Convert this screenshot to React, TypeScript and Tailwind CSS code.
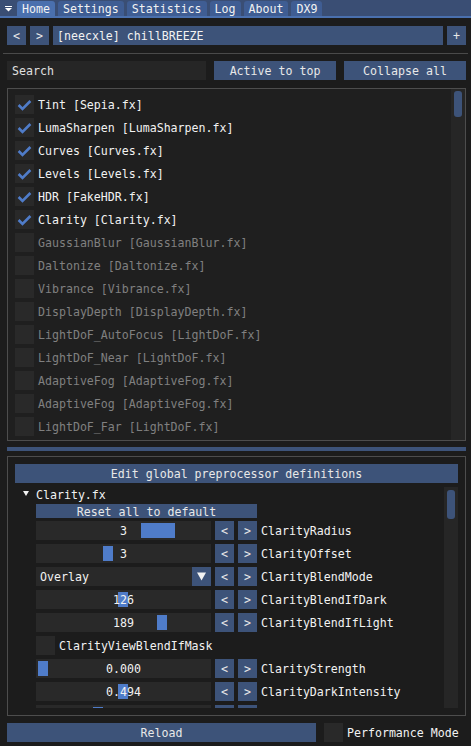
import React from "react";

const effects: [string, boolean][] = [
  ["Tint [Sepia.fx]", true],
  ["LumaSharpen [LumaSharpen.fx]", true],
  ["Curves [Curves.fx]", true],
  ["Levels [Levels.fx]", true],
  ["HDR [FakeHDR.fx]", true],
  ["Clarity [Clarity.fx]", true],
  ["GaussianBlur [GaussianBlur.fx]", false],
  ["Daltonize [Daltonize.fx]", false],
  ["Vibrance [Vibrance.fx]", false],
  ["DisplayDepth [DisplayDepth.fx]", false],
  ["LightDoF_AutoFocus [LightDoF.fx]", false],
  ["LightDoF_Near [LightDoF.fx]", false],
  ["AdaptiveFog [AdaptiveFog.fx]", false],
  ["AdaptiveFog [AdaptiveFog.fx]", false],
  ["LightDoF_Far [LightDoF.fx]", false],
];

const tabs = ["Home", "Settings", "Statistics", "Log", "About", "DX9"];

function Check({ on }: { on?: boolean }) {
  return (
    <div className="h-[19px] w-[19px] shrink-0 bg-[#292929]">
      {on && (
        <svg width="19" height="19" viewBox="0 0 19 19">
          <polyline
            points="3.6,10 7.5,14 15.4,6"
            fill="none"
            stroke="#4f7cc9"
            strokeWidth="2.6"
          />
        </svg>
      )}
    </div>
  );
}

function Btn({ children, className = "" }: { children?: React.ReactNode; className?: string }) {
  return (
    <div className={`flex h-[19px] shrink-0 items-center justify-center bg-[#3d5379] text-[#e8e8e8] ${className}`}>
      <span className="pt-[2px]">{children}</span>
    </div>
  );
}

function Slider({ value, grab, grabW = 10 }: { value: string; grab: number; grabW?: number }) {
  return (
    <div className="relative flex h-[19px] w-[175px] shrink-0 items-center justify-center bg-[#292929]">
      <div className="absolute top-[2px] bottom-[2px] bg-[#4f7cc9]" style={{ left: grab, width: grabW }} />
      <span className="relative pt-[2px]">{value}</span>
    </div>
  );
}

function ParamRow({ label, children }: { label: string; children: React.ReactNode }) {
  return (
    <div className="flex h-[19px] shrink-0 items-center gap-[4px]">
      {children}
      <Btn className="w-[19px]">&lt;</Btn>
      <Btn className="w-[19px]">&gt;</Btn>
      <span className="pt-[2px]">{label}</span>
    </div>
  );
}

export default function App() {
  return (
    <div className="flex h-[746px] w-[471px] flex-col overflow-hidden bg-[#1c1c1c] font-['DejaVu_Sans_Mono',monospace] text-[11.6px] leading-[13px] text-[#f2f2f2]">

      {/* Tab bar */}

      <div className="flex h-[16px] shrink-0 items-end bg-[#3a4e74]">
        <div className="flex h-[16px] w-[16px] items-center justify-center">
          <svg width="16" height="16" viewBox="0 0 16 16">
            <rect x="5" y="6" width="7" height="1" fill="#fff" />
            <polygon points="5,8 12,8 8.5,11.5" fill="#fff" />
          </svg>
        </div>
        <div className="ml-[1px] flex gap-[3px]">
          {tabs.map((t, i) => (
            <div
              key={t}
              className={`flex h-[15px] items-center rounded-t-[3px] px-[5px] pt-[2px] ${i === 0 ? "bg-[#4a70ae]" : "bg-[#3f5d93]"}`}
            >
              {t}
            </div>
          ))}
        </div>
      </div>
      <div className="h-[2px] shrink-0 bg-[#4a70ae]" />

      <div className="flex flex-1 flex-col pl-[7px] pr-[5px]">

        {/* Preset row */}

        <div className="mt-[8px] flex gap-[4px]">
          <Btn className="w-[19px]">&lt;</Btn>
          <Btn className="w-[19px]">&gt;</Btn>
          <Btn className="flex-1 !justify-start pl-[4px] text-[#f2f2f2]">[neecxle] chillBREEZE</Btn>
          <Btn className="w-[19px]">+</Btn>
        </div>

        <div className="-ml-[4px] -mr-[2px] mt-[8px] h-[1px] shrink-0 bg-[#4a4a4a]" />

        {/* Search row */}

        <div className="mt-[7px] flex gap-[8px]">
          <div className="flex h-[19px] w-[199px] items-center bg-[#262626] pl-[5px] text-[#e0e0e0]">
            <span className="pt-[2px]">Search</span>
          </div>
          <Btn className="w-[122px]">Active to top</Btn>
          <Btn className="w-[122px]">Collapse all</Btn>
        </div>

        {/* Effect list */}

        <div className="mt-[8px] flex h-[353px] shrink-0 overflow-hidden border border-[#4d4d4d] bg-[#1f1f1f]">
          <div className="flex flex-1 flex-col gap-[4px] overflow-hidden pl-[7px] pt-[6px]">
            {effects.map(([name, on], i) => (
              <div key={i} className="flex h-[19px] shrink-0 items-center gap-[4px]">
                <Check on={on} />
                <span className={`pt-[2px] ${on ? "text-[#f2f2f2]" : "text-[#808080]"}`}>{name}</span>
              </div>
            ))}
            <div className="h-[19px] shrink-0">
              <Check />
            </div>
          </div>
          <div className="w-[14px] shrink-0 bg-[#262626] pt-[2px]">
            <div className="mx-[3px] h-[26px] rounded-[3px] bg-[#3d5379]" />
          </div>
        </div>

        {/* Splitter */}

        <div className="mt-[6px] h-[4px] shrink-0 bg-[#3d5379]" />

        {/* Effect parameters */}

        <div className="mt-[5px] flex h-[260px] shrink-0 flex-col border border-[#4d4d4d] bg-[#1c1c1c] px-[7px] pt-[7px]">
          <Btn>Edit global preprocessor definitions</Btn>

          <div className="mt-[4px] flex h-[221px] shrink-0 overflow-hidden">
            <div className="flex flex-1 flex-col overflow-hidden">
              <div className="flex h-[14px] shrink-0 items-center">
                <svg className="ml-[8px]" width="7" height="6" viewBox="0 0 7 6">
                  <polygon points="0,0 6,0 3,5" fill="#f2f2f2" />
                </svg>
                <span className="ml-[6px] pt-[2px]">Clarity.fx</span>
              </div>

              <div className="ml-[21px] mt-[3px] flex h-[14px] w-[221px] shrink-0 items-center justify-center bg-[#3d5379] text-[#e8e8e8]">
                <span className="pt-[2px]">Reset all to default</span>
              </div>

              <div className="ml-[21px] mt-[3px] flex flex-col gap-[4px]">
                <ParamRow label="ClarityRadius">
                  <Slider value="3" grab={105} grabW={34} />
                </ParamRow>
                <ParamRow label="ClarityOffset">
                  <Slider value="3" grab={67} />
                </ParamRow>
                <ParamRow label="ClarityBlendMode">
                  <div className="flex h-[19px] w-[175px] shrink-0 items-center bg-[#292929]">
                    <span className="flex-1 pl-[4px] pt-[2px]">Overlay</span>
                    <div className="flex h-[19px] w-[19px] items-center justify-center bg-[#3d5379]">
                      <svg width="19" height="19" viewBox="0 0 19 19">
                        <polygon points="5,5.5 14,5.5 9.5,13.5" fill="#f2f2f2" />
                      </svg>
                    </div>
                  </div>
                </ParamRow>
                <ParamRow label="ClarityBlendIfDark">
                  <Slider value="126" grab={82} />
                </ParamRow>
                <ParamRow label="ClarityBlendIfLight">
                  <Slider value="189" grab={121} />
                </ParamRow>
                <div className="flex h-[19px] shrink-0 items-center gap-[4px]">
                  <Check />
                  <span className="pt-[2px]">ClarityViewBlendIfMask</span>
                </div>
                <ParamRow label="ClarityStrength">
                  <Slider value="0.000" grab={2} />
                </ParamRow>
                <ParamRow label="ClarityDarkIntensity">
                  <Slider value="0.494" grab={82} />
                </ParamRow>
                <div className="flex h-[19px] shrink-0 gap-[4px]">
                  <div className="relative h-[19px] w-[175px] shrink-0 bg-[#292929]">
                    <div className="absolute top-[2px] bottom-[2px] left-[57px] w-[10px] bg-[#4f7cc9]" />
                  </div>
                  <div className="h-[19px] w-[19px] bg-[#3d5379]" />
                  <div className="h-[19px] w-[19px] bg-[#3d5379]" />
                </div>
              </div>
            </div>
            <div className="w-[14px] shrink-0 bg-[#262626] pt-[3px]">
              <div className="mx-[3px] h-[29px] rounded-[3px] bg-[#3d5379]" />
            </div>
          </div>
        </div>

        {/* Footer */}

        <div className="mt-[7px] flex items-center gap-[8px]">
          <Btn className="w-[309px]">Reload</Btn>
          <div className="flex items-center gap-[4px]">
            <Check />
            <span className="pt-[2px]">Performance Mode</span>
          </div>
        </div>

      </div>
    </div>
  );
}
